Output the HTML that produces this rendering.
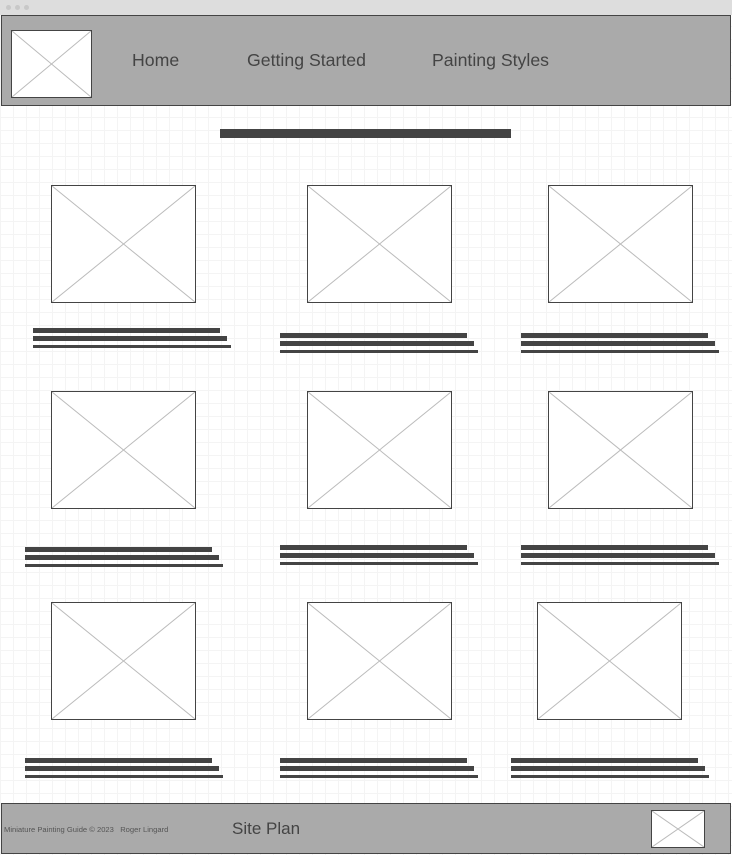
<!DOCTYPE html>
<html><head><style>
*{margin:0;padding:0;box-sizing:border-box}
body{width:732px;height:855px;position:relative;overflow:hidden;background:#fff;
background-image:linear-gradient(#f4f4f4 1px,transparent 1px),linear-gradient(90deg,#f4f4f4 1px,transparent 1px);background-size:13px 13px;font-family:"Liberation Sans",sans-serif}
.a{position:absolute}
.top{left:0;top:0;width:732px;height:15px;background:#ddd}
.dot{width:5px;height:5px;border-radius:50%;background:#c8c8c8;top:5px}
.bar{background:#aaa;border:1px solid #444}
.img{background:#fff;border:1px solid #444}
.img svg{position:absolute;left:0;top:0;width:100%;height:100%}
.nav{color:#444;font-size:17.7px;top:50px}
.l{background:#444;height:5px}
</style></head><body>
<div class="a top"></div>
<div class="a dot" style="left:6px"></div><div class="a dot" style="left:15px"></div><div class="a dot" style="left:24px"></div>
<div class="a bar" style="left:1px;top:15px;width:730px;height:91px"></div>
<div class="a img" style="left:11px;top:30px;width:81px;height:68px"><svg preserveAspectRatio="none" viewBox="0 0 100 100"><path d="M0 0L100 100M100 0L0 100" stroke="#bbb" stroke-width="1" vector-effect="non-scaling-stroke"/></svg></div>
<div class="a nav" style="left:132px">Home</div>
<div class="a nav" style="left:247px">Getting Started</div>
<div class="a nav" style="left:432px">Painting Styles</div>
<div class="a" style="left:220px;top:129px;width:291px;height:9px;background:#444"></div>

<div id="g"></div>

<div class="a bar" style="left:1px;top:803px;width:730px;height:51px"></div>
<div class="a" style="left:4px;top:825px;font-size:7.6px;color:#555;white-space:nowrap">Miniature Painting Guide © 2023 &nbsp; Roger Lingard</div>
<div class="a" style="left:232px;top:819px;font-size:17px;color:#444">Site Plan</div>
<div class="a img" style="left:651px;top:810px;width:54px;height:38px"><svg preserveAspectRatio="none" viewBox="0 0 100 100"><path d="M0 0L100 100M100 0L0 100" stroke="#bbb" stroke-width="1" vector-effect="non-scaling-stroke"/></svg></div>

<script>
var imgs=[[51,185],[307,185],[548,185],[51,391],[307,391],[548,391],[51,602],[307,602],[537,602]];
var txt=[[33,328],[280,333],[521,333],[25,547],[280,545],[521,545],[25,758],[280,758],[511,758]];
var h='';
imgs.forEach(function(p){h+='<div class="a img" style="left:'+p[0]+'px;top:'+p[1]+'px;width:145px;height:118px"><svg preserveAspectRatio="none" viewBox="0 0 100 100"><path d="M0 0L100 100M100 0L0 100" stroke="#bbb" stroke-width="1" vector-effect="non-scaling-stroke"/></svg></div>';});
txt.forEach(function(p){h+='<div class="a l" style="left:'+p[0]+'px;top:'+p[1]+'px;width:187px"></div><div class="a l" style="left:'+p[0]+'px;top:'+(p[1]+8)+'px;width:194px"></div><div class="a l" style="left:'+p[0]+'px;top:'+(p[1]+17)+'px;width:198px;height:3px"></div>';});
document.getElementById('g').innerHTML=h;
</script>
</body></html>
